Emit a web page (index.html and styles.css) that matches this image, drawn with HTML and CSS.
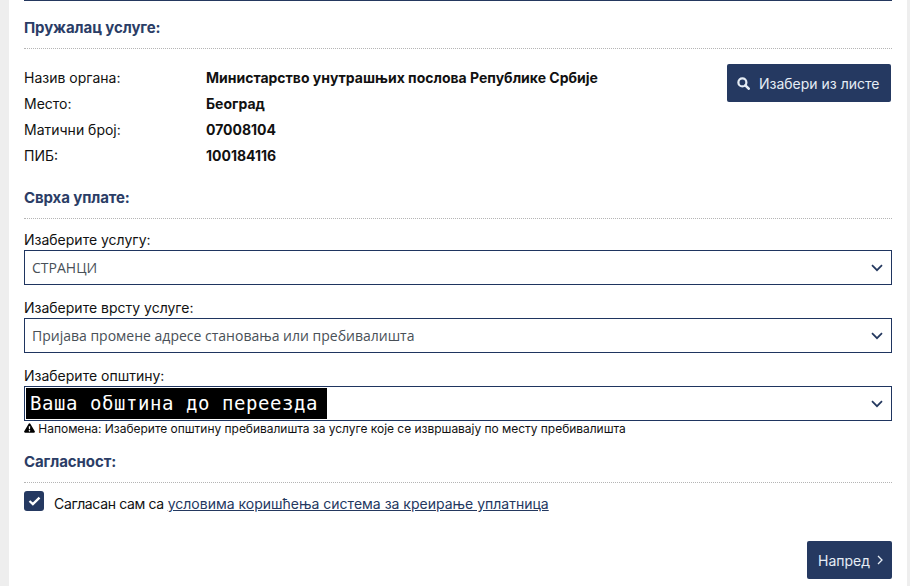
FILE: index.html
```html
<!DOCTYPE html>
<html lang="sr">
<head>
<meta charset="utf-8">
<title>Пружалац услуге</title>
<link rel="stylesheet" href="styles.css">
</head>
<body>
<main class="panel">
  <section class="section provider">
    <h2 class="heading">Пружалац услуге:</h2>
    <div class="provider-body">
      <dl class="facts">
        <dt>Назив органа:</dt><dd>Министарство унутрашњих послова Републике Србије</dd>
        <dt>Место:</dt><dd>Београд</dd>
        <dt>Матични број:</dt><dd>07008104</dd>
        <dt>ПИБ:</dt><dd>100184116</dd>
      </dl>
      <button class="btn btn-pick" type="button">
        <svg class="icon-search" viewBox="0 0 14 14" width="13" height="13" aria-hidden="true"><circle cx="5.8" cy="5.8" r="4.3" fill="none" stroke="currentColor" stroke-width="2.4"/><path d="M9 9l3.6 3.6" fill="none" stroke="currentColor" stroke-width="2.8" stroke-linecap="round"/></svg>
        Изабери из листе
      </button>
    </div>
  </section>
  <section class="section purpose">
    <h2 class="heading">Сврха уплате:</h2>
    <div class="field">
      <label class="label">Изаберите услугу:</label>
      <div class="select"><span>СТРАНЦИ</span><svg class="chev" viewBox="0 0 12 8" width="12" height="8" aria-hidden="true"><path d="M1 1.2l5 5 5-5" fill="none" stroke="currentColor" stroke-width="1.7"/></svg></div>
    </div>
    <div class="field">
      <label class="label">Изаберите врсту услуге:</label>
      <div class="select"><span>Пријава промене адресе становања или пребивалишта</span><svg class="chev" viewBox="0 0 12 8" width="12" height="8" aria-hidden="true"><path d="M1 1.2l5 5 5-5" fill="none" stroke="currentColor" stroke-width="1.7"/></svg></div>
    </div>
    <div class="field field-last">
      <label class="label">Изаберите општину:</label>
      <div class="select select-redacted"><span class="redacted">Ваша обштина до переезда</span><svg class="chev" viewBox="0 0 12 8" width="12" height="8" aria-hidden="true"><path d="M1 1.2l5 5 5-5" fill="none" stroke="currentColor" stroke-width="1.7"/></svg></div>
      <p class="note"><svg viewBox="0 0 12 11" width="11" height="10" aria-hidden="true"><path fill-rule="evenodd" d="M6 0.3c.4 0 .7.2.9.5l4.9 8.4c.4.7-.1 1.5-.9 1.5H1.100c-.8 0-1.300-.8-.9-1.500L5.100.8C5.300.5 5.600.3 6 .3zM5.200 3.500l.2 3.500h1.200l.2-3.500zM6 7.700a.9.9 0 1 0 0 1.800.9.9 0 0 0 0-1.800z"/></svg> Напомена: Изаберите општину пребивалишта за услуге које се извршавају по месту пребивалишта</p>
    </div>
  </section>
  <section class="section consent">
    <h2 class="heading">Сагласност:</h2>
    <div class="agree">
      <span class="check"><svg viewBox="0 0 14 11" width="13" height="10" aria-hidden="true"><path d="M1.500 5.500l3.700 3.500L12.500 1.800" fill="none" stroke="#fff" stroke-width="2.500"/></svg></span>
      <span class="agree-text"><span class="agree-lead">Сагласан сам са</span> <a href="#" class="link">условима коришћења система за креирање уплатница</a></span>
    </div>
  </section>
  <div class="actions">
    <button class="btn btn-next" type="button">Напред <svg viewBox="0 0 6 10" width="6" height="10" aria-hidden="true"><path d="M1 1l4 4-4 4" fill="none" stroke="currentColor" stroke-width="1.300"/></svg></button>
  </div>
</main>
</body>
</html>
```
FILE: styles.css
```css
* { box-sizing: border-box; }
html, body { margin: 0; height: 586px; overflow: hidden; }
body {
  background: #eeeeee;
  font-family: "Inter", "Noto Sans", sans-serif;
  font-size: 14px;
  color: #111;
}
.panel {
  margin: 0 3px 0 9px;
  height: 586px;
  background: #fff;
  padding: 0 15px;
  display: flow-root;
  overflow: hidden;
}
.provider { border-top: 1px solid #24385f; padding-top: 18px; }
.heading {
  margin: 0;
  font-size: 15px;
  letter-spacing: -0.1px;
  line-height: 18px;
  font-weight: 700;
  color: #2b3d66;
  padding-bottom: 11px;
  border-bottom: 1px dotted #b5b5b5;
}
.provider-body {
  display: flex;
  justify-content: space-between;
  align-items: flex-start;
  padding-top: 15px;
  padding-right: 1px;
}
.facts {
  margin: 0;
  display: grid;
  grid-template-columns: 182px auto;
  grid-auto-rows: 26px;
  align-items: center;
}
.facts dt { font-weight: 400; }
.facts dd { margin: 0; font-weight: 700; }
.btn {
  border: 0;
  border-radius: 2px;
  background: #253961;
  color: #e6edf5;
  font: inherit;
  display: inline-flex;
  align-items: center;
  height: 38px;
}
.btn-pick { width: 164px; padding: 0 10px; gap: 9px; white-space: nowrap; }
.icon-search { flex: none; }
.purpose { padding-top: 21px; }
.field { margin-top: 13px; }
.field + .field { margin-top: 15px; }
.label { display: block; line-height: 16px; margin-bottom: 2px; }
.select {
  height: 35px;
  border: 1px solid #1f3560;
  padding: 0 8px 0 7px;
  display: flex;
  align-items: center;
  justify-content: space-between;
  font-family: "Open Sans", "Noto Sans", sans-serif;
  font-size: 14px;
  color: #495057;
}
.chev { color: #24385f; flex: none; }
.select-redacted { padding-left: 1px; }
.redacted {
  display: block;
  background: #000;
  color: #fff;
  font-family: "DejaVu Sans Mono", monospace;
  font-size: 19px;
  letter-spacing: 0.56px;
  line-height: 31px;
  padding: 0 4px;
  width: 301px;
  white-space: nowrap;
  overflow: hidden;
}
.note {
  margin: 1px 0 0;
  font-size: 12px;
  letter-spacing: -0.03px;
  line-height: 14px;
  white-space: nowrap;
}
.consent { padding-top: 17px; }
.agree { display: flex; align-items: center; gap: 10px; margin-top: 7px; }
.agree-text { padding-top: 5px; }
.agree-lead { letter-spacing: -0.35px; }
.check {
  width: 20px;
  height: 20px;
  border-radius: 3px;
  background: #253961;
  display: flex;
  align-items: center;
  justify-content: center;
  flex: none;
}
.link { color: #24385f; text-decoration: underline; }
.actions { display: flex; justify-content: flex-end; margin-top: 29px; }
.btn-next { width: 85px; padding: 0 9px 0 11px; justify-content: space-between; }
```
